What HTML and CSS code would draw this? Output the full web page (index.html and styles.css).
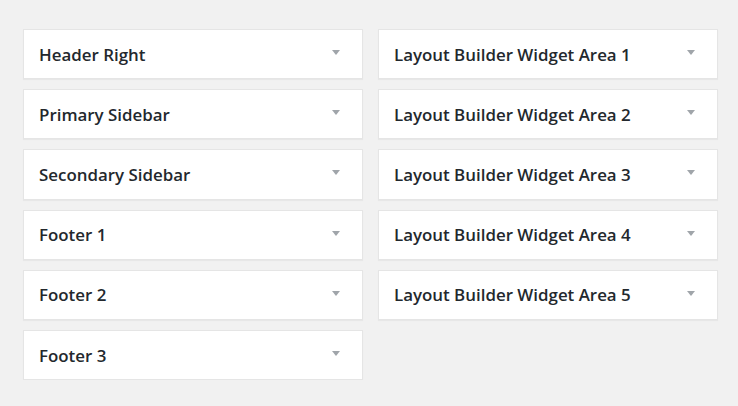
FILE: index.html
```html
<!DOCTYPE html>
<html lang="en">
<head>
    <meta charset="UTF-8">
    <title>Widgets</title>
    <link rel="stylesheet" href="styles.css">
</head>
<body>
    <div class="widgets-wrap">
        <div class="sidebar-col">
            <div class="sidebar-box"><h2 class="sidebar-name">Header Right</h2><span class="toggle"></span></div>
            <div class="sidebar-box"><h2 class="sidebar-name">Primary Sidebar</h2><span class="toggle"></span></div>
            <div class="sidebar-box"><h2 class="sidebar-name">Secondary Sidebar</h2><span class="toggle"></span></div>
            <div class="sidebar-box"><h2 class="sidebar-name">Footer 1</h2><span class="toggle"></span></div>
            <div class="sidebar-box"><h2 class="sidebar-name">Footer 2</h2><span class="toggle"></span></div>
            <div class="sidebar-box"><h2 class="sidebar-name">Footer 3</h2><span class="toggle"></span></div>
        </div>
        <div class="sidebar-col">
            <div class="sidebar-box"><h2 class="sidebar-name">Layout Builder Widget Area 1</h2><span class="toggle"></span></div>
            <div class="sidebar-box"><h2 class="sidebar-name">Layout Builder Widget Area 2</h2><span class="toggle"></span></div>
            <div class="sidebar-box"><h2 class="sidebar-name">Layout Builder Widget Area 3</h2><span class="toggle"></span></div>
            <div class="sidebar-box"><h2 class="sidebar-name">Layout Builder Widget Area 4</h2><span class="toggle"></span></div>
            <div class="sidebar-box"><h2 class="sidebar-name">Layout Builder Widget Area 5</h2><span class="toggle"></span></div>
        </div>
    </div>
</body>
</html>
```

FILE: styles.css
```css
body {
    margin: 0;
    background: #f1f1f1;
    font-family: 'Open Sans', sans-serif;
    color: #23282d;
}

.widgets-wrap {
    display: flex;
    gap: 15px;
    padding: 29px 20px 0 23px;
}

.sidebar-col {
    width: 341px;
    display: flex;
    flex-direction: column;
    gap: 10px;
}

.sidebar-box {
    box-sizing: border-box;
    height: 50.2px;
    background: #fff;
    border: 1px solid #e5e5e5;
    box-shadow: 0 1px 1px rgba(0, 0, 0, 0.04);
    display: flex;
    align-items: center;
    justify-content: space-between;
    padding: 0 22px 0 15px;
}

.sidebar-name {
    margin: 0;
    font-size: 16.9px;
    font-weight: 600;
    line-height: 1;
    padding-top: 2px;
}

/* small down arrow, like the dashicon */
.toggle {
    width: 0;
    height: 0;
    border-left: 4px solid transparent;
    border-right: 4px solid transparent;
    border-top: 5px solid #a0a5aa;
    margin-top: -3px;
}
```
